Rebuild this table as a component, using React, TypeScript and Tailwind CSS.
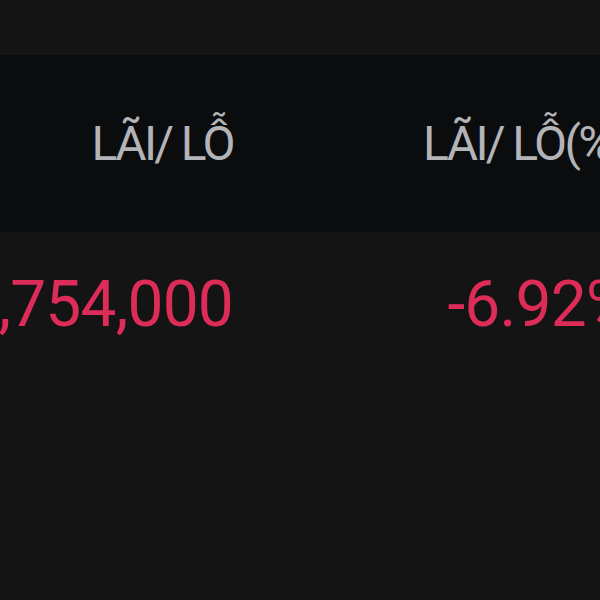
const COLS = [
  { label: "LÃI/ LỖ", value: "-16,754,000", hw: "w-[407px]", vw: "w-[407px]" },
  { label: "LÃI/ LỖ(%)", value: "-6.92%", hw: "w-[392px]", vw: "w-[399px]" },
];

export default function App() {
  return (
    <div
      className="w-[600px] h-[600px] overflow-hidden bg-[#141415]"
      style={{ fontFamily: 'Roboto, "Noto Sans", sans-serif' }}
    >
      <div className="h-[55px]" />
      {/* header row */}
      <div className="h-[177px] bg-[#0b0c0e] flex items-center overflow-hidden">
        <div className="flex shrink-0 ml-[-174px]">
          {COLS.map((c) => (
            <div
              key={c.label}
              className={`${c.hw} shrink-0 text-right text-[48px] leading-none tracking-[-2.6px] text-[#b3b4b7] whitespace-nowrap`}
            >
              {c.label}
            </div>
          ))}
        </div>
      </div>
      {/* value row */}
      <div className="h-[146px] flex items-center overflow-hidden">
        <div className="flex shrink-0 ml-[-174px]">
          {COLS.map((c) => (
            <div
              key={c.value}
              className={`${c.vw} shrink-0 text-right text-[64px] leading-none tracking-[-0.8px] text-[#dd2c58] whitespace-nowrap`}
            >
              {c.value}
            </div>
          ))}
        </div>
      </div>
    </div>
  );
}
